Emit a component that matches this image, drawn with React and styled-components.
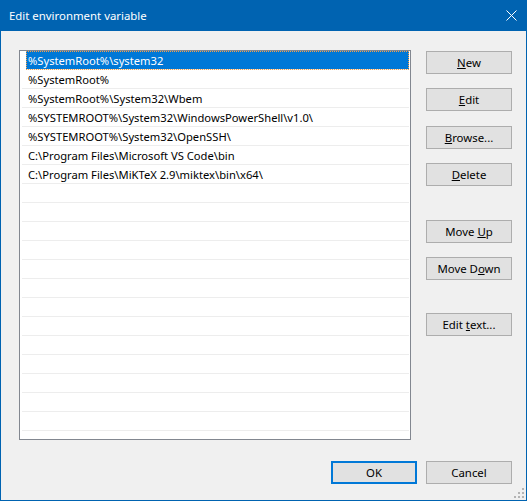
import styled, { createGlobalStyle } from "styled-components";

const GlobalStyle = createGlobalStyle`
    html, body {
        margin: 0;
        padding: 0;
        background: #f0f0f0;
    }
    body {
        font-family: "Noto Sans", "Open Sans", "DejaVu Sans", sans-serif;
        font-size: 11.2px;
        color: #000;
    }
`;

const Window = styled.div`
    width: 527px;
    height: 501px;
    box-sizing: border-box;
    border: 1px solid #0063b1;
    border-top: none;
    background: #f0f0f0;
    display: flex;
    flex-direction: column;
    position: relative;
`;

const TitleBar = styled.div`
    height: 31px;
    margin: 0 -1px;
    background: #0063b1;
    color: #fff;
    display: flex;
    align-items: center;
    justify-content: space-between;
    padding: 0 10px 0 9px;
    flex-shrink: 0;
`;

const Title = styled.span`
    font-size: 11.4px;
    line-height: 1;
    padding-top: 1px;
`;

const CloseIcon = styled.svg`
    width: 11px;
    height: 11px;
    display: block;
`;

const Body = styled.div`
    flex: 1;
    display: flex;
    flex-direction: column;
    padding: 19px 14px 16px 18px;
`;

const Main = styled.div`
    display: flex;
    gap: 15px;
`;

const ListBox = styled.div`
    width: 392px;
    height: 390px;
    box-sizing: border-box;
    border: 1px solid #828790;
    background: #fff;
    overflow: hidden;
    padding-left: 2px;
`;

const Row = styled.div`
    height: 19px;
    box-sizing: border-box;
    border-bottom: 1px solid #ededed;
    display: flex;
    align-items: center;
    white-space: pre;
    margin-left: ${(p) => (p.$selected ? "4px" : "0")};
    margin-right: 1px;
    padding-left: ${(p) => (p.$selected ? "2px" : "6px")};
    padding-top: 1px;
    background: ${(p) => (p.$selected ? "#0078d7" : "transparent")};
    color: ${(p) => (p.$selected ? "#fff" : "#000")};
    outline: ${(p) => (p.$selected ? "1px dotted #f7a04a" : "none")};
    outline-offset: -1px;
`;

const Side = styled.div`
    display: flex;
    flex-direction: column;
    padding-top: 1px;
`;

const Button = styled.button`
    width: 86px;
    height: 23px;
    box-sizing: border-box;
    margin-top: ${(p) => p.$gap || 0}px;
    background: #e1e1e1;
    border: ${(p) => (p.$default ? "2px solid #0078d7" : "1px solid #adadad")};
    font-family: inherit;
    font-size: 11.4px;
    color: #000;
    padding: 0;
    line-height: 1;
    text-align: center;
    white-space: pre;
`;

const Footer = styled.div`
    display: flex;
    justify-content: flex-end;
    gap: 9px;
    margin-top: 21px;
`;

const Grip = styled.svg`
    position: absolute;
    right: 2px;
    bottom: 2px;
    width: 10px;
    height: 10px;
`;

const paths = [
    "%SystemRoot%\\system32",
    "%SystemRoot%",
    "%SystemRoot%\\System32\\Wbem",
    "%SYSTEMROOT%\\System32\\WindowsPowerShell\\v1.0\\",
    "%SYSTEMROOT%\\System32\\OpenSSH\\",
    "C:\\Program Files\\Microsoft VS Code\\bin",
    "C:\\Program Files\\MiKTeX 2.9\\miktex\\bin\\x64\\",
];

const rows = [...paths, ...Array(14).fill("")];

export default function App() {
    return (
        <>
            <GlobalStyle />
            <Window>
                <TitleBar>
                    <Title>Edit environment variable</Title>
                    <CloseIcon viewBox="0 0 11 11">
                        <path d="M0.5 0.5 L10.5 10.5 M10.5 0.5 L0.5 10.5" stroke="#fff" strokeWidth="1" />
                    </CloseIcon>
                </TitleBar>
                <Body>
                    <Main>
                        <ListBox>
                            {rows.map((text, i) => (
                                <Row key={i} $selected={i === 0}>
                                    {text}
                                </Row>
                            ))}
                        </ListBox>
                        <Side>
                            <Button><u>N</u>ew</Button>
                            <Button $gap={14}><u>E</u>dit</Button>
                            <Button $gap={15}><u>B</u>rowse...</Button>
                            <Button $gap={14}><u>D</u>elete</Button>
                            <Button $gap={34}>Move <u>U</u>p</Button>
                            <Button $gap={14}>Move D<u>o</u>wn</Button>
                            <Button $gap={33}>Edit <u>t</u>ext...</Button>
                        </Side>
                    </Main>
                    <Footer>
                        <Button $default>OK</Button>
                        <Button>Cancel</Button>
                    </Footer>
                </Body>
                <Grip viewBox="0 0 10 10">
                    <rect x="8" y="0" width="2" height="2" fill="#b4b4b4" />
                    <rect x="4" y="4" width="2" height="2" fill="#b4b4b4" />
                    <rect x="8" y="4" width="2" height="2" fill="#b4b4b4" />
                    <rect x="0" y="8" width="2" height="2" fill="#b4b4b4" />
                    <rect x="4" y="8" width="2" height="2" fill="#b4b4b4" />
                    <rect x="8" y="8" width="2" height="2" fill="#b4b4b4" />
                </Grip>
            </Window>
        </>
    );
}
